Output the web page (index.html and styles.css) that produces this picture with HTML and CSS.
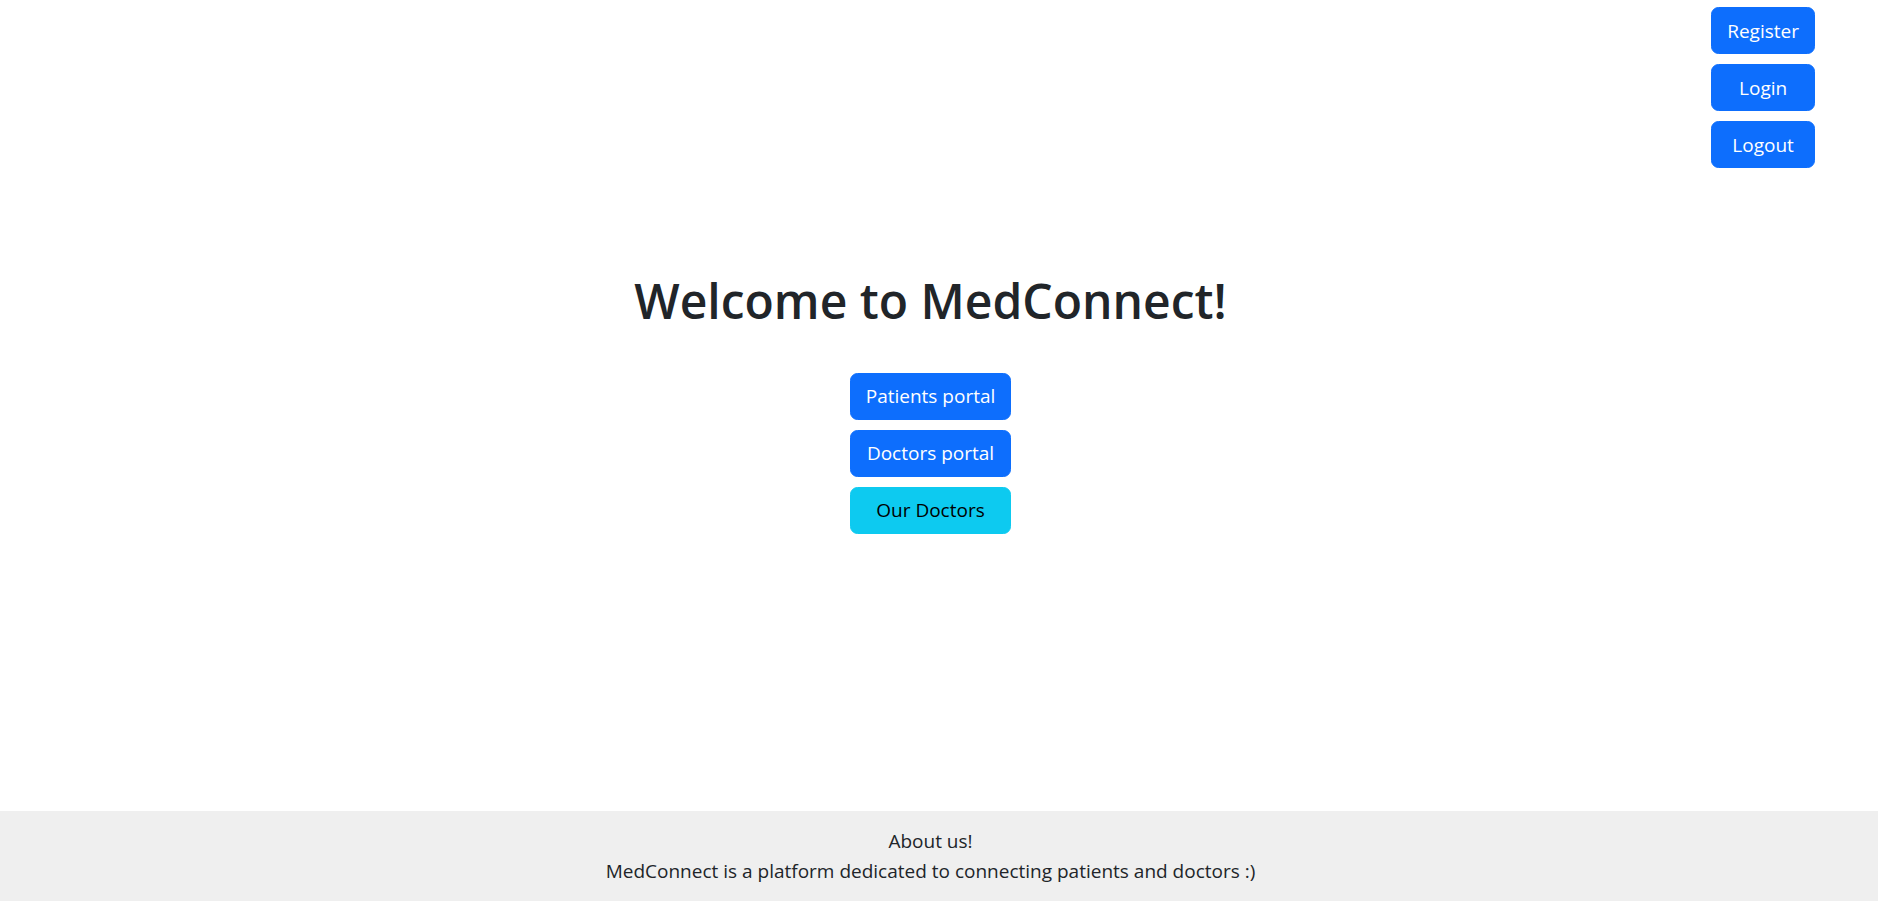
FILE: index.html
```html
<!DOCTYPE html>
<html lang="en">
<head>
<meta charset="utf-8">
<title>MedConnect</title>
<link rel="stylesheet" href="styles.css">
</head>
<body>
<div class="page">
  <header class="topbar">
    <nav class="auth">
      <button class="btn btn-primary">Register</button>
      <button class="btn btn-primary">Login</button>
      <button class="btn btn-primary">Logout</button>
    </nav>
  </header>
  <main class="hero">
    <h1 class="title">Welcome to MedConnect!</h1>
    <div class="portals">
      <button class="btn btn-primary">Patients portal</button>
      <button class="btn btn-primary">Doctors portal</button>
      <button class="btn btn-info">Our Doctors</button>
    </div>
  </main>
  <footer class="footer">
    <p>About us!</p>
    <p>MedConnect is a platform dedicated to connecting patients and doctors :)</p>
  </footer>
</div>
</body>
</html>
```
FILE: styles.css
```css
* { box-sizing: border-box; }
html, body { margin: 0; padding: 0; }
body {
  font-family: "Open Sans", "Noto Sans", sans-serif;
  font-size: 19px;
  line-height: 30px;
  color: #212529;
  background: #fff;
}
.page {
  min-height: 100vh;
  display: flex;
  flex-direction: column;
}
.topbar {
  display: flex;
  justify-content: flex-end;
  padding: 7px 63px 0 0;
}
.auth {
  display: flex;
  flex-direction: column;
  gap: 10px;
}
.btn {
  font-family: inherit;
  font-size: 19px;
  line-height: 30px;
  padding: 7.5px 15px;
  border: 1px solid transparent;
  border-radius: 7.5px;
  cursor: pointer;
  text-align: center;
}
.btn-primary { background: #0d6efd; border-color: #0d6efd; color: #fff; }
.btn-info { background: #0dcaf0; border-color: #0dcaf0; color: #000; }
.hero {
  flex: 1;
  display: flex;
  flex-direction: column;
  align-items: center;
  padding-right: 17px;
}
.title {
  margin: 104px 0 43px;
  font-size: 48px;
  font-weight: 600;
  line-height: 1.2;
}
.portals {
  display: flex;
  flex-direction: column;
  gap: 10px;
}
.footer {
  background: #efefef;
  padding: 15px 17px 15px 0;
  text-align: center;
}
.footer p { margin: 0; }
```
